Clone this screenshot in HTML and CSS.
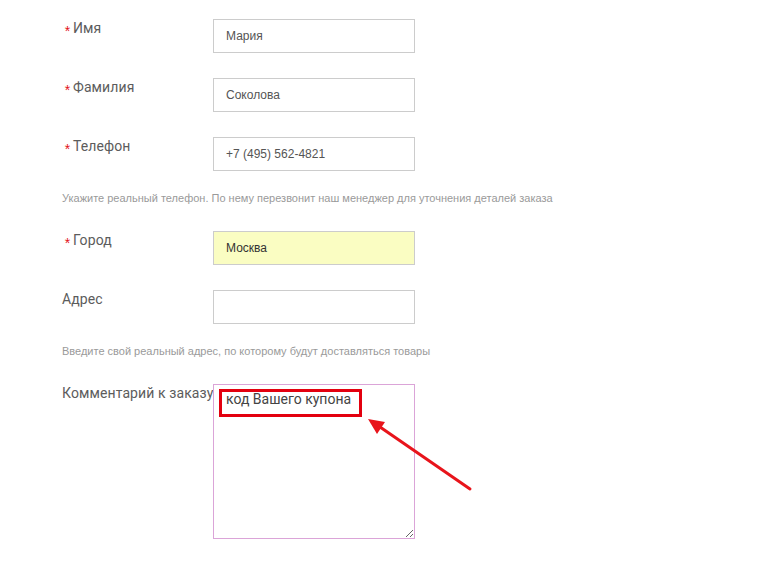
FILE: index.html
```html
<!DOCTYPE html>
<html lang="ru">
<head>
<meta charset="utf-8">
<link rel="stylesheet" href="styles.css">
</head>
<body>
<form class="form">
  <div class="row">
    <label class="label"><span class="star">*</span>Имя</label>
    <div class="field"><input class="input" type="text" value="Мария"></div>
  </div>
  <div class="row">
    <label class="label"><span class="star">*</span>Фамилия</label>
    <div class="field"><input class="input" type="text" value="Соколова"></div>
  </div>
  <div class="row row-hinted">
    <label class="label"><span class="star">*</span>Телефон</label>
    <div class="field"><input class="input" type="text" value="+7 (495) 562-4821"></div>
  </div>
  <p class="hint">Укажите реальный телефон. По нему перезвонит наш менеджер для уточнения деталей заказа</p>
  <div class="row">
    <label class="label"><span class="star">*</span>Город</label>
    <div class="field"><input class="input input-filled" type="text" value="Москва"></div>
  </div>
  <div class="row row-hinted">
    <label class="label">Адрес</label>
    <div class="field"><input class="input" type="text" value=""></div>
  </div>
  <p class="hint">Введите свой реальный адрес, по которому будут доставляться товары</p>
  <div class="row">
    <label class="label">Комментарий к заказу</label>
    <div class="field field-area">
      <textarea class="area">код Вашего купона</textarea>
      <span class="mark"></span>
    </div>
  </div>
</form>
<svg class="arrow" width="762" height="575" viewBox="0 0 762 575">
  <line x1="470" y1="489" x2="380" y2="427" stroke="#e8141b" stroke-width="3" stroke-linecap="round"/>
  <polygon points="368,419 385,422 377,434" fill="#e8141b"/>
</svg>
</body>
</html>
```
FILE: styles.css
```css
html, body {
  margin: 0;
  padding: 0;
  background: #fff;
}
body {
  width: 762px;
  height: 575px;
  overflow: hidden;
  position: relative;
}
.form {
  padding: 19px 0 0 62px;
  margin: 0;
}
.row {
  display: flex;
  align-items: flex-start;
  margin-bottom: 25px;
}
.row-hinted {
  margin-bottom: 20px;
}
.label {
  width: 151px;
  flex: none;
  font-family: Roboto, "Liberation Sans", sans-serif;
  font-size: 14px;
  line-height: 18px;
  color: #5c5c5c;
  padding-top: 0;
  letter-spacing: 0.1px;
  white-space: nowrap;
}
.star {
  display: inline-block;
  width: 11px;
  text-align: center;
  color: #e3131b;
  font-family: "Liberation Sans", sans-serif;
  font-size: 14px;
  vertical-align: -3px;
  line-height: 10px;
}
.field {
  width: 202px;
}
.input {
  box-sizing: border-box;
  display: block;
  width: 202px;
  height: 34px;
  margin: 0;
  padding: 0 12px;
  border: 1px solid #cccccc;
  background: #fff;
  font-family: "Liberation Sans", Arial, sans-serif;
  font-size: 12px;
  color: #555;
  outline: none;
}
.input-filled {
  background: #fafdc2;
  color: #333;
}
.hint {
  margin: 0 0 26px 0;
  font-family: "Liberation Sans", Arial, sans-serif;
  font-size: 11px;
  line-height: 14px;
  color: #9a9a9a;
}
.field-area {
  position: relative;
}
.area {
  box-sizing: border-box;
  display: block;
  width: 202px;
  height: 155px;
  margin: 0;
  padding: 5px 12px;
  border: 1px solid #dba4d8;
  background: #fff;
  font-family: Roboto, "Liberation Sans", sans-serif;
  font-size: 14px;
  line-height: 18px;
  color: #444;
  outline: none;
  resize: both;
}
.mark {
  position: absolute;
  left: 6px;
  top: 5px;
  width: 143px;
  height: 28px;
  box-sizing: border-box;
  border: 3px solid #e3000f;
  pointer-events: none;
}
.arrow {
  position: absolute;
  left: 0;
  top: 0;
  pointer-events: none;
}
```
